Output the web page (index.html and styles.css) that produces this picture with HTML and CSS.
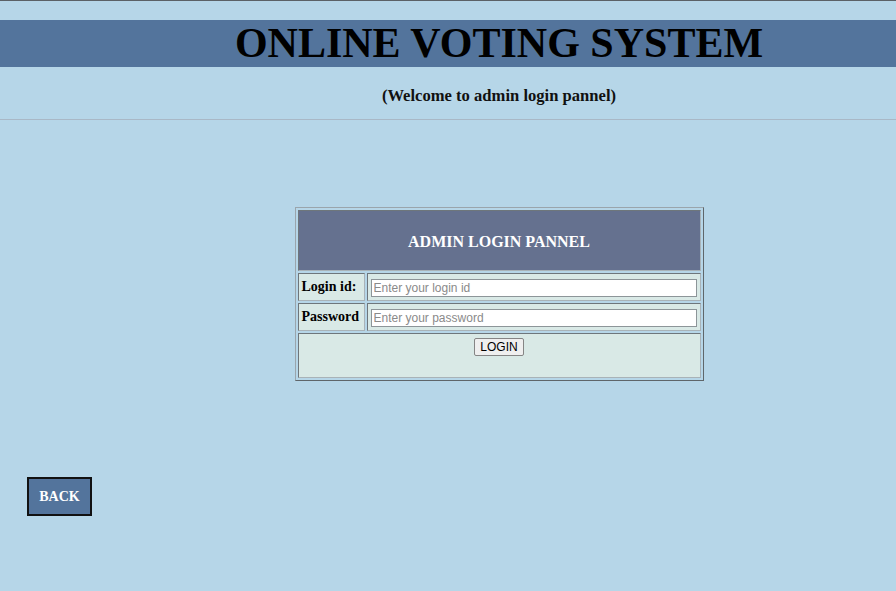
FILE: index.html
```html
<!DOCTYPE html>
<html>
<head>
<meta charset="utf-8">
<link rel="stylesheet" href="styles.css">
</head>
<body>
<div class="topline"></div>
<div class="band"><h1 class="title">ONLINE VOTING SYSTEM</h1></div>
<div class="sub">(Welcome to admin login pannel)</div>
<hr class="rule">
<div class="main">
  <table class="login">
    <tr><th colspan="2" class="head">ADMIN LOGIN PANNEL</th></tr>
    <tr><td class="lbl">Login id:</td><td class="fld"><input type="text" placeholder="Enter your login id"></td></tr>
    <tr><td class="lbl">Password</td><td class="fld"><input type="password" placeholder="Enter your password"></td></tr>
    <tr><td colspan="2" class="btncell"><button class="btn">LOGIN</button></td></tr>
  </table>
</div>
<div class="backwrap"><a class="back">BACK</a></div>
</body>
</html>
```
FILE: styles.css
```css
html, body { margin: 0; padding: 0; }
body {
  background: #b6d6e8;
  font-family: "Liberation Serif", "Times New Roman", serif;
  height: 591px;
  overflow: hidden;
}
.topline { height: 1px; background: #5b6166; }
.band {
  margin-top: 19px;
  height: 47px;
  background: #53749c;
  padding-left: 102px;
  display: flex;
  align-items: center;
  justify-content: center;
}
.title {
  margin: 0;
  font-size: 42px;
  font-weight: bold;
  color: #000;
  line-height: 47px;
}
.sub {
  padding-left: 102px;
  text-align: center;
  font-weight: bold;
  font-size: 16.6px;
  margin-top: 20px;
  height: 18px;
  line-height: 18px;
  color: #111;
}
.rule {
  margin: 14px 0 0;
  border: 0;
  border-top: 1px solid #a9b8c6;
  height: 0;
}
.main {
  padding-left: 102px;
  display: flex;
  justify-content: center;
  padding-top: 87px;
}
.login {
  width: 409px;
  border: 1px solid;
  border-color: #9aa5ac #5f666a #5f666a #9aa5ac;
  border-spacing: 2px;
}
.login td, .login th {
  border: 1px solid;
  border-color: #6e767b #a9b3b8 #a9b3b8 #6e767b;
  background: #d9e9e6;
  padding: 1px;
}
.login th.head {
  background: #65718f;
  color: #fff;
  font-size: 16px;
  height: 54px;
  padding-top: 4px;
}
.lbl {
  font-weight: bold;
  font-size: 14px;
  padding: 0 3px !important;
  height: 26px;
  white-space: nowrap;
  width: 59px;
}
.fld { padding: 0 3px !important; }
.fld input {
  width: 100%;
  box-sizing: border-box;
  height: 18px;
  border: 1px solid #8d9599;
  font-family: "Liberation Sans", Arial, sans-serif;
  font-size: 12px;
  padding: 0 2px;
  background: #fff;
}
.fld input::placeholder { color: #8a8a8a; }
.btncell {
  text-align: center;
  vertical-align: top;
  height: 39px;
  padding-top: 3px !important;
}
.btn {
  font-family: "Liberation Sans", Arial, sans-serif;
  font-size: 12px;
  padding: 1px 5px;
  height: 18px;
  line-height: 14px;
  background: #efefef;
  border: 1px solid #858585;
  border-radius: 2px;
  color: #000;
}
.backwrap { padding: 96px 0 0 27px; }
.back {
  display: inline-flex;
  align-items: center;
  justify-content: center;
  width: 61px;
  height: 35px;
  background: #53749c;
  border: 2px solid #111;
  color: #fff;
  font-weight: bold;
  font-size: 14px;
}
```
